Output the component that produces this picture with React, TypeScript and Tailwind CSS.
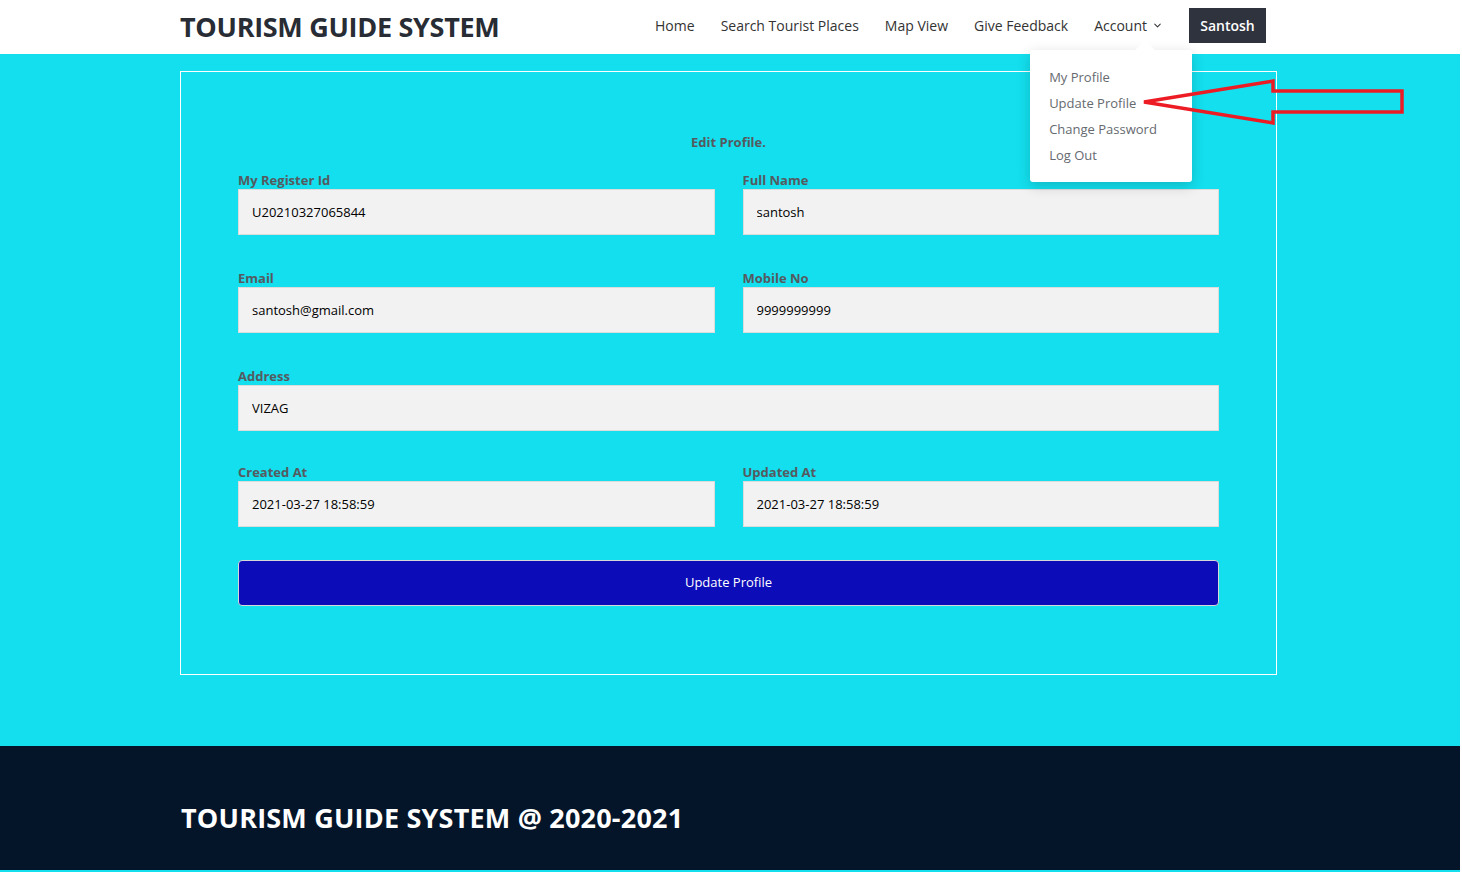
import { ChevronDown } from "lucide-react";

const font = { fontFamily: '"Open Sans", "Noto Sans", sans-serif' };

function Field({ label, value }: { label: string; value: string }) {
  return (
    <div className="flex flex-col">
      <label className="text-[13px] font-bold leading-[16px] text-[#555a60] mb-[1px]">{label}</label>
      <input
        readOnly
        value={value}
        className="h-[46px] w-full border border-[#dcdcdc] bg-[#f2f2f2] px-[13px] text-[13px] text-black outline-none"
      />
    </div>
  );
}

function Dropdown() {
  const items = ["My Profile", "Update Profile", "Change Password", "Log Out"];
  return (
    <div className="absolute left-[-64px] top-[35px] z-10 w-[162px] rounded-[3px] bg-white py-[14px] shadow-[0_4px_14px_rgba(0,0,0,0.18)]">
      <div className="absolute -top-[7px] left-[108px] h-[14px] w-[14px] rotate-45 bg-white" />
      <ul className="relative flex flex-col">
        {items.map((item) => (
          <li key={item} className="px-[19px] text-[13px] leading-[26px] text-[#666a70]">
            {item}
          </li>
        ))}
      </ul>
    </div>
  );
}

function RedArrow() {
  return (
    <svg className="pointer-events-none absolute left-0 top-0 z-20" width="1462" height="140">
      <polygon
        points="1144,102 1273,81 1273,91 1402,91 1402,112 1273,112 1273,123"
        fill="none"
        stroke="#ed1c24"
        strokeWidth="3.5"
        strokeLinejoin="miter"
      />
    </svg>
  );
}

export default function App() {
  return (
    <div className="relative min-h-screen w-[1460px] bg-[#13dfee] pb-[2px]" style={font}>
      {/* Header */}
      <header className="h-[54px] bg-white">
        <div className="flex h-full items-center pl-[180px] pr-[194px]">
          <h1 className="text-[27px] font-bold tracking-[-0.3px] text-[#282c35]">TOURISM GUIDE SYSTEM</h1>
          <nav className="ml-auto mb-[4px] flex items-center gap-[26px] text-[14px] text-[#333]">
            <span>Home</span>
            <span>Search Tourist Places</span>
            <span>Map View</span>
            <span>Give Feedback</span>
            <span className="relative flex items-center gap-[5px]">
              Account <ChevronDown size={11} strokeWidth={2.2} />
              <Dropdown />
            </span>
            <span className="flex h-[35px] w-[77px] items-center justify-center bg-[#2f333d] text-[14px] font-semibold text-white">
              Santosh
            </span>
          </nav>
        </div>
      </header>

      <RedArrow />

      {/* Form */}
      <main className="pl-[180px] pt-[17px] pb-[71px]">
        <div className="w-[1097px] border border-white px-[57px] pt-[61px] pb-[68px]">
          <h2 className="mb-[19px] text-center text-[13px] font-bold text-[#555a60]">Edit Profile.</h2>
          <div className="grid grid-cols-2 gap-x-[28px] gap-y-[35px]">
            <Field label="My Register Id" value="U20210327065844" />
            <Field label="Full Name" value="santosh" />
            <Field label="Email" value="santosh@gmail.com" />
            <Field label="Mobile No" value="9999999999" />
            <div className="col-span-2">
              <Field label="Address" value="VIZAG" />
            </div>
            <div className="col-span-2 -mt-[2px] grid grid-cols-2 gap-x-[28px]">
              <Field label="Created At" value="2021-03-27 18:58:59" />
              <Field label="Updated At" value="2021-03-27 18:58:59" />
            </div>
          </div>
          <button className="mt-[33px] h-[46px] w-full rounded-[4px] border border-[#d8d8d8] bg-[#0c0cb8] text-[13px] text-white">
            Update Profile
          </button>
        </div>
      </main>

      {/* Footer */}
      <footer className="flex h-[124px] items-center bg-[#04152a] pl-[181px] pt-[22px]">
        <p className="text-[27px] font-bold tracking-[0.2px] text-white">TOURISM GUIDE SYSTEM @ 2020-2021</p>
      </footer>
    </div>
  );
}
